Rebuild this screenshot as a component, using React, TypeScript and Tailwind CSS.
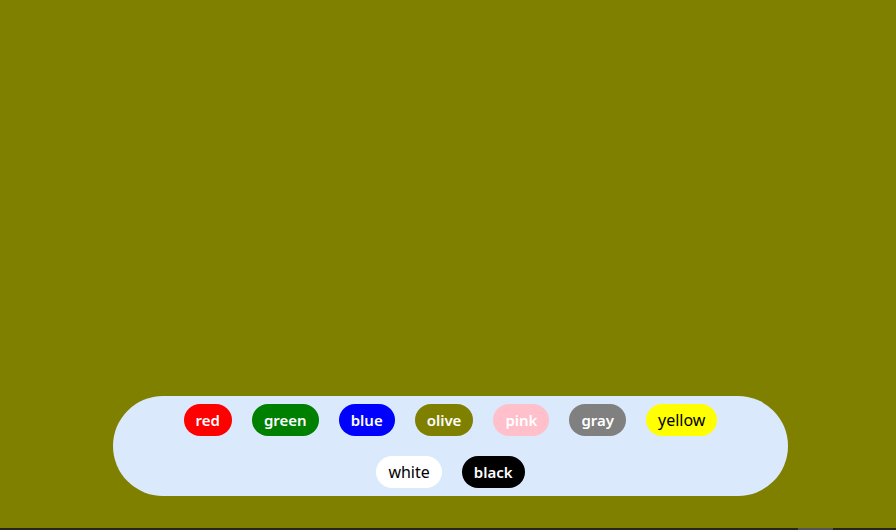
const colors = [
  { name: 'red', cls: 'bg-[#ff0000] text-white font-semibold' },
  { name: 'green', cls: 'bg-[#008000] text-white font-semibold' },
  { name: 'blue', cls: 'bg-[#0000ff] text-white font-semibold' },
  { name: 'olive', cls: 'bg-[#808000] text-white font-semibold' },
  { name: 'pink', cls: 'bg-[#ffc0cb] text-white font-semibold' },
  { name: 'gray', cls: 'bg-[#808080] text-white font-semibold' },
  { name: 'yellow', cls: 'bg-[#ffff00] text-black font-normal text-[16px]' },
  { name: 'white', cls: 'bg-white text-black font-normal text-[16px]' },
  { name: 'black', cls: 'bg-black text-white font-semibold' },
];

export default function App() {
  return (
    <div className="flex h-[530px] w-[896px] flex-col bg-[#808000] font-['Noto_Sans',sans-serif]">
      <div className="flex-1" />
      <div className="mb-[32px] ml-[113px] flex h-[100px] w-[675px] flex-wrap content-start justify-center gap-x-5 gap-y-5 rounded-full bg-[#dbe9fd] px-[56px] py-2">
        {colors.map((c) => (
          <button
            key={c.name}
            className={`flex h-8 items-center rounded-full px-3 text-[15px] ${c.cls}`}
          >
            {c.name}
          </button>
        ))}
      </div>
      <div className="flex h-[2px] bg-[#26261f]">
        <div className="w-[798px]" />
        <div className="w-[35px] bg-[#555555]" />
      </div>
    </div>
  );
}
